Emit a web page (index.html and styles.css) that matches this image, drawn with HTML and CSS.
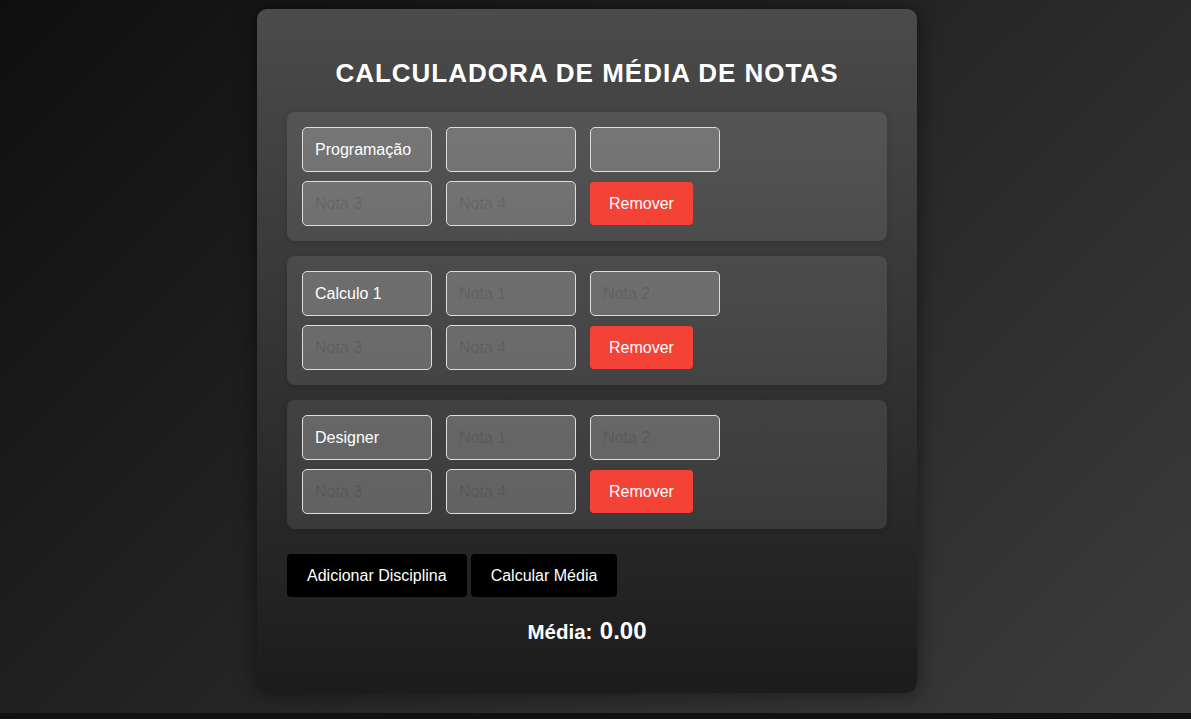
FILE: index.html
```html
<!DOCTYPE html>
<html lang="pt-BR">
<head>
<meta charset="UTF-8">
<title>Calculadora de Média de Notas</title>
<link rel="stylesheet" href="styles.css">
</head>
<body>
<div class="page">
  <div class="container">
    <h2 class="title">CALCULADORA DE MÉDIA DE NOTAS</h2>
    <div class="subjects">
      <div class="subject">
        <input class="field" type="text" value="Programação">
        <input class="field" type="text">
        <input class="field" type="text">
        <input class="field" type="text" placeholder="Nota 3">
        <input class="field" type="text" placeholder="Nota 4">
        <button class="btn-remove">Remover</button>
      </div>
      <div class="subject">
        <input class="field" type="text" value="Calculo 1">
        <input class="field" type="text" placeholder="Nota 1">
        <input class="field" type="text" placeholder="Nota 2">
        <input class="field" type="text" placeholder="Nota 3">
        <input class="field" type="text" placeholder="Nota 4">
        <button class="btn-remove">Remover</button>
      </div>
      <div class="subject">
        <input class="field" type="text" value="Designer">
        <input class="field" type="text" placeholder="Nota 1">
        <input class="field" type="text" placeholder="Nota 2">
        <input class="field" type="text" placeholder="Nota 3">
        <input class="field" type="text" placeholder="Nota 4">
        <button class="btn-remove">Remover</button>
      </div>
    </div>
    <div class="actions">
      <button class="btn-dark">Adicionar Disciplina</button>
      <button class="btn-dark">Calcular Média</button>
    </div>
    <div class="result"><span class="result-label">Média:</span> <span class="result-value">0.00</span></div>
  </div>
</div>
</body>
</html>
```
FILE: styles.css
```css
html {
  background: #111111;
}
body {
  margin: 0;
  font-family: "Liberation Sans", Arial, sans-serif;
}
.page {
  min-height: calc(100vh - 6px);
  box-sizing: border-box;
  background: linear-gradient(135deg, #0f0f0f 0%, #3c3c3c 100%);
  padding: 9px 17px 0 0;
  display: flex;
  justify-content: center;
  align-items: flex-start;
}
.container {
  width: 660px;
  height: 684px;
  box-sizing: border-box;
  padding: 30px;
  border-radius: 10px;
  background: linear-gradient(180deg, #4b4b4b 0%, #1c1c1c 100%);
  box-shadow: 0 0 20px rgba(0, 0, 0, 0.5);
  color: #ffffff;
}
.title {
  margin: 20px 0 25px;
  text-align: center;
  font-size: 26px;
  letter-spacing: 1px;
  font-weight: bold;
  line-height: 28px;
}
.subjects {
  display: flex;
  flex-direction: column;
  gap: 15px;
}
.subject {
  display: grid;
  grid-template-columns: repeat(3, 130px);
  column-gap: 14px;
  row-gap: 9px;
  padding: 15px;
  border-radius: 8px;
  background: rgba(255, 255, 255, 0.09);
  box-shadow: 0 2px 6px rgba(0, 0, 0, 0.15);
}
.field {
  width: 130px;
  height: 45px;
  box-sizing: border-box;
  margin: 0;
  padding: 0 12px;
  border: 1px solid #dddddd;
  border-radius: 5px;
  background: rgba(255, 255, 255, 0.2);
  color: #ffffff;
  font-family: "Liberation Sans", Arial, sans-serif;
  font-size: 16px;
  outline: none;
}
.field::placeholder {
  color: rgba(0, 0, 0, 0.12);
}
.btn-remove {
  justify-self: start;
  align-self: center;
  height: 43px;
  padding: 0 19px;
  border: none;
  border-radius: 4px;
  background: #f44336;
  color: #ffffff;
  font-family: "Liberation Sans", Arial, sans-serif;
  font-size: 16px;
  cursor: pointer;
}
.actions {
  display: flex;
  gap: 4px;
  margin-top: 25px;
}
.btn-dark {
  height: 43px;
  padding: 0 20px;
  border: none;
  border-radius: 4px;
  background: #000000;
  color: #ffffff;
  font-family: "Liberation Sans", Arial, sans-serif;
  font-size: 16px;
  cursor: pointer;
}
.result {
  margin-top: 20px;
  text-align: center;
  font-weight: bold;
}
.result-label {
  font-size: 20.5px;
}
.result-value {
  margin-left: 3px;
  font-size: 24px;
}
```
